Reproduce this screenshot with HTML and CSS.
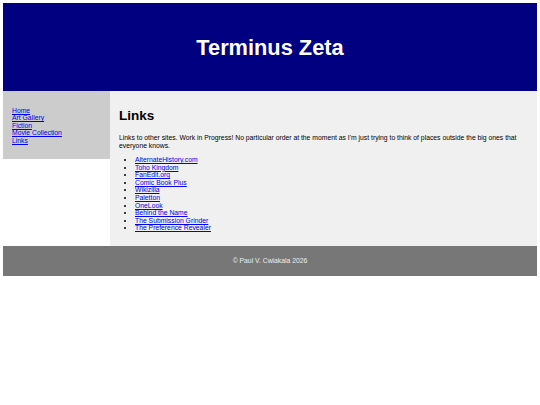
FILE: index.html
```html
<!DOCTYPE html>
<html lang="en">
<head>
<meta charset="utf-8">
<title>Terminus Zeta - Links</title>
<link rel="stylesheet" href="styles.css">
</head>
<body>
<header class="site-header">
  <h1 class="site-title">Terminus Zeta</h1>
</header>
<div class="layout">
  <nav class="sidebar">
    <a href="#">Home</a>
    <a href="#">Art Gallery</a>
    <a href="#">Fiction</a>
    <a href="#">Movie Collection</a>
    <a href="#">Links</a>
  </nav>
  <main class="content">
    <h2 class="page-title">Links</h2>
    <p class="intro">Links to other sites. Work in Progress! No particular order at the moment as I'm just trying to think of places outside the big ones that everyone knows.</p>
    <ul class="link-list">
      <li><a href="#">AlternateHistory.com</a></li>
      <li><a href="#">Toho Kingdom</a></li>
      <li><a href="#">FanEdit.org</a></li>
      <li><a href="#">Comic Book Plus</a></li>
      <li><a href="#">Wikizilla</a></li>
      <li><a href="#">Paletton</a></li>
      <li><a href="#">OneLook</a></li>
      <li><a href="#">Behind the Name</a></li>
      <li><a href="#">The Submission Grinder</a></li>
      <li><a href="#">The Preference Revealer</a></li>
    </ul>
  </main>
</div>
<footer class="site-footer">
  <p>&copy; Paul V. Cwiakala 2026</p>
</footer>
</body>
</html>
```
FILE: styles.css
```css
html, body {
  background: #ffffff;
}
body {
  margin: 3px;
  font-family: "Liberation Sans", Arial, sans-serif;
  font-size: 6.8px;
  line-height: 7.6px;
  color: #000;
}
a {
  color: #0000ee;
}
.site-header {
  background: #000080;
  height: 88px;
  display: flex;
  align-items: center;
  justify-content: center;
}
.site-title {
  margin: 0;
  padding-top: 2px;
  color: #ffffff;
  font-size: 21.8px;
  line-height: 1;
  font-weight: bold;
}
.layout {
  display: flex;
  align-items: flex-start;
}
.sidebar {
  width: 107px;
  flex: none;
  box-sizing: border-box;
  background: #cccccc;
  height: 68px;
  padding: 15.5px 9px 0;
}
.sidebar a {
  display: block;
  line-height: 7.5px;
}
.content {
  flex: 1;
  background: #f0f0f0;
  padding: 17px 9px 0;
  height: 155px;
  box-sizing: border-box;
}
.page-title {
  margin: 0 0 10px;
  font-size: 13.5px;
  line-height: 16px;
}
.intro {
  margin: 0 0 6px;
  line-height: 8px;
}
.link-list {
  margin: 0;
  padding-left: 16px;
}
.site-footer {
  background: #777777;
  color: #eeeeee;
  height: 30px;
  display: flex;
  align-items: center;
  justify-content: center;
}
.site-footer p {
  margin: 0;
}
```
